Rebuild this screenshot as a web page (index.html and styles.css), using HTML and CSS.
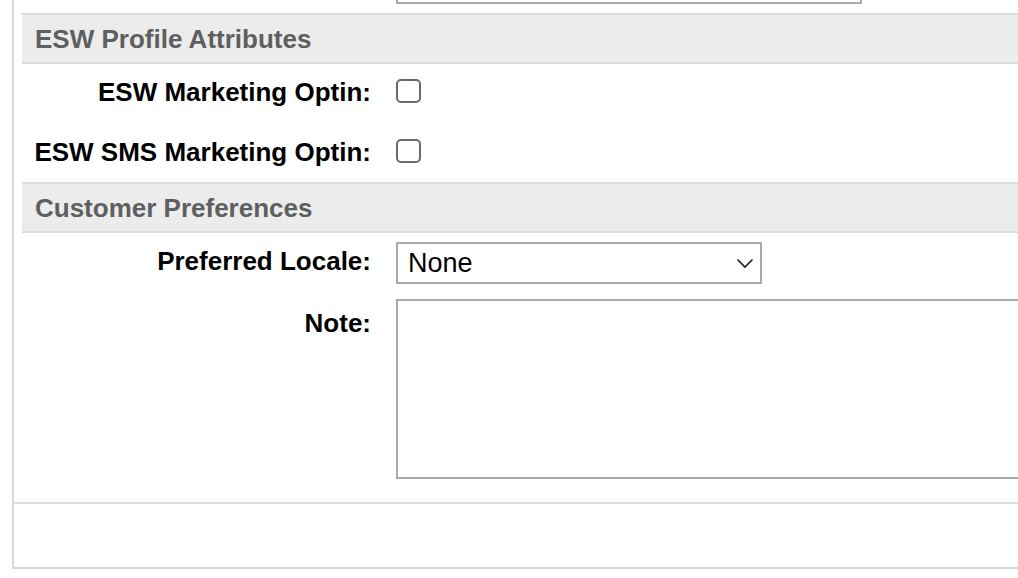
FILE: index.html
```html
<!DOCTYPE html>
<html lang="en">
<head>
<meta charset="utf-8">
<title>Profile</title>
<link rel="stylesheet" href="styles.css">
</head>
<body>
<div class="panel">
  <div class="content">
    <div class="prev-row"><div class="prev-field"></div></div>
    <div class="section-head">ESW Profile Attributes</div>
    <div class="form form-checks">
      <label class="lbl lbl-check" for="mk">ESW Marketing Optin:</label>
      <div class="ctl"><input type="checkbox" id="mk" class="check"></div>
      <label class="lbl lbl-check" for="sms">ESW SMS Marketing Optin:</label>
      <div class="ctl"><input type="checkbox" id="sms" class="check"></div>
    </div>
    <div class="section-head">Customer Preferences</div>
    <div class="form form-prefs">
      <label class="lbl lbl-select" for="loc">Preferred Locale:</label>
      <div class="ctl">
        <span class="select-wrap">
          <select id="loc" class="select"><option>None</option></select>
          <svg class="chev" width="18" height="11" viewBox="0 0 18 11"><path d="M1.5 1.5 L9 9 L16.5 1.5" fill="none" stroke="#222" stroke-width="1.7"/></svg>
        </span>
      </div>
      <label class="lbl lbl-note" for="note">Note:</label>
      <div class="ctl"><textarea id="note" class="note"></textarea></div>
    </div>
  </div>
  <div class="footer"></div>
</div>
</body>
</html>
```
FILE: styles.css
```css
html, body {
  margin: 0;
  padding: 0;
  background: #fff;
  overflow: hidden;
  font-family: "Liberation Sans", Arial, sans-serif;
}
.panel {
  margin-left: 12px;
  width: 1100px;
  border-left: 2px solid #d9d9d9;
  border-bottom: 2px solid #d9d9d9;
}
.content {
  padding-left: 8px;
}
.prev-row {
  padding-left: 374px;
}
.prev-field {
  width: 462px;
  height: 2px;
  border: 2px solid #a9a9a9;
  border-top: none;
}
.section-head {
  margin-top: 9px;
  height: 47px;
  border-top: 2px solid #dcdcdc;
  border-bottom: 2px solid #dcdcdc;
  background: #ececec;
  color: #5e5f61;
  font-weight: bold;
  font-size: 26px;
  line-height: 49px;
  padding-left: 13px;
}
.form {
  display: grid;
  grid-template-columns: 349px 1fr;
  column-gap: 25px;
}
.form-checks {
  row-gap: 35px;
  padding-top: 15px;
  padding-bottom: 18px;
}
.form-prefs {
  row-gap: 15px;
  padding-top: 9px;
  padding-bottom: 23px;
}
.form + .section-head {
  margin-top: 0;
}
.lbl {
  text-align: right;
  font-weight: bold;
  font-size: 26px;
  color: #000;
  line-height: 28px;
  white-space: nowrap;
}
.lbl-check {
  line-height: 24px;
  padding-top: 1px;
}
.lbl-select {
  padding-top: 5px;
}
.lbl-note {
  padding-top: 10px;
}
.ctl {
  display: flex;
  align-items: flex-start;
}
.check {
  appearance: none;
  -webkit-appearance: none;
  margin: 0;
  width: 25px;
  height: 24px;
  border: 2px solid #6b6b6b;
  border-radius: 5px;
  background: #fff;
}
.select-wrap {
  position: relative;
  display: inline-block;
}
.select {
  appearance: none;
  -webkit-appearance: none;
  display: block;
  width: 366px;
  height: 42px;
  margin: 0;
  border: 2px solid #a9a9a9;
  border-radius: 0;
  background: #fff;
  font-family: "Liberation Sans", Arial, sans-serif;
  font-size: 27px;
  color: #000;
  padding: 0 0 0 10px;
}
.chev {
  position: absolute;
  right: 8px;
  top: 16px;
  pointer-events: none;
}
.note {
  display: block;
  width: 700px;
  height: 180px;
  margin: 0;
  border: 2px solid #a9a9a9;
  border-radius: 0;
  resize: none;
  background: #fff;
  box-sizing: border-box;
}
.footer {
  height: 63px;
  border-top: 2px solid #dcdcdc;
}
```
